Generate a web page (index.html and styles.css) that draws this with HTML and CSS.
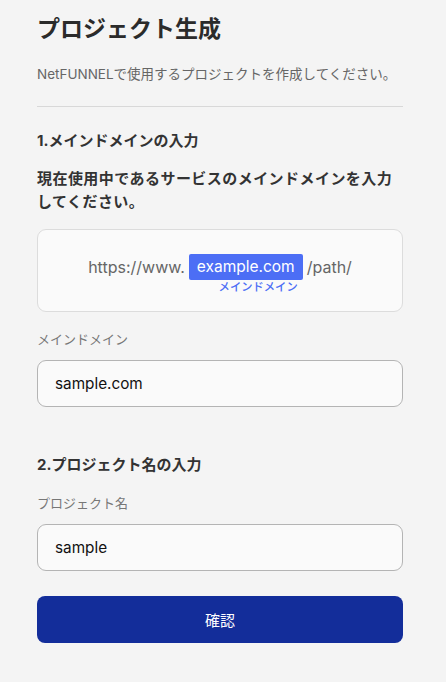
FILE: index.html
```html
<!DOCTYPE html>
<html lang="ja">
<head>
<meta charset="utf-8">
<link rel="stylesheet" href="styles.css">
</head>
<body>
<main class="page">
  <h1 class="title">プロジェクト生成</h1>
  <p class="subtitle">NetFUNNELで使用するプロジェクトを作成してください。</p>
  <hr class="divider">

  <h2 class="section-title">1.メインドメインの入力</h2>
  <p class="desc">現在使用中であるサービスのメインドメインを入力してください。</p>
  <div class="example-box">
    <span class="url-part">https://www.</span>
    <span class="domain">
      <span class="domain-chip">example.com</span>
      <span class="domain-label">メインドメイン</span>
    </span>
    <span class="url-part">/path/</span>
  </div>

  <label class="field-label">メインドメイン</label>
  <div class="input">sample.com</div>

  <h2 class="section-title second">2.プロジェクト名の入力</h2>
  <label class="field-label">プロジェクト名</label>
  <div class="input">sample</div>

  <button class="confirm">確認</button>
</main>
</body>
</html>
```

FILE: styles.css
```css
* { box-sizing: border-box; }
html, body { margin: 0; padding: 0; background: #f4f4f4; }
body {
  font-family: Inter, "Noto Sans CJK JP", sans-serif;
  color: #333;
}
.page {
  width: 366px;
  margin-left: 37px;
  padding-top: 14px;
  display: flex;
  flex-direction: column;
}
.title {
  margin: 0;
  font-size: 23px;
  font-weight: 700;
  line-height: 30px;
  color: #2b2b2b;
}
.subtitle {
  margin: 20px 0 0;
  font-size: 13.5px;
  line-height: 20px;
  color: #666;
}
.divider {
  margin: 22px 0 0;
  border: 0;
  border-top: 1px solid #d8d8d8;
  height: 0;
}
.section-title {
  margin: 23px 0 0;
  font-size: 15px;
  font-weight: 700;
  line-height: 22px;
  color: #333;
}
.section-title.second { margin-top: 47px; }
.desc {
  margin: 15px 0 0;
  font-size: 15px;
  font-weight: 700;
  line-height: 23px;
  color: #333;
  letter-spacing: 0.45px;
}
.example-box {
  margin-top: 16px;
  height: 83px;
  border: 1px solid #dcdcdc;
  border-radius: 9px;
  background: #fafafa;
  display: flex;
  justify-content: center;
  align-items: flex-start;
  padding-top: 24px;
  gap: 4px;
}
.url-part {
  font-size: 16px;
  line-height: 26px;
  color: #666;
}
.domain {
  display: flex;
  flex-direction: column;
  align-items: center;
}
.domain-chip {
  background: #4c6ef5;
  color: #fff;
  font-size: 15.5px;
  line-height: 26px;
  padding: 0 8px;
  border-radius: 2px;
}
.domain-label {
  align-self: flex-end;
  margin-right: 5px;
  font-size: 11.3px;
  line-height: 14px;
  color: #4c6ef5;
  font-weight: 500;
}
.field-label {
  margin-top: 18px;
  font-size: 13px;
  line-height: 18px;
  color: #777;
}
.input {
  margin-top: 12px;
  height: 47px;
  border: 1px solid #b4b4b4;
  border-radius: 9px;
  background: #fafafa;
  padding-left: 17px;
  display: flex;
  align-items: center;
  font-size: 15.3px;
  color: #111;
}
.confirm {
  margin-top: 25px;
  height: 47px;
  border: 0;
  border-radius: 8px;
  background: #132d9a;
  color: #fff;
  font-family: inherit;
  font-size: 15px;
  width: 100%;
}
```
